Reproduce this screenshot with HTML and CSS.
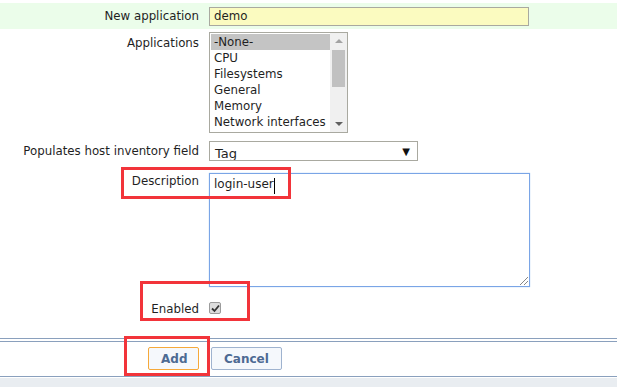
FILE: index.html
```html
<!DOCTYPE html>
<html lang="en">
<head>
  <meta charset="UTF-8" />
  <title>Item prototype</title>
  <link rel="stylesheet" href="styles.css">
</head>
<body>
  <div class="form">
    <div class="row row-new">
      <label class="label">New application</label>
      <div class="field"><div class="input-new">demo</div></div>
    </div>

    <div class="row row-apps">
      <label class="label">Applications</label>
      <div class="field">
        <div class="listbox">
          <ul class="options">
            <li class="selected">-None-</li>
            <li>CPU</li>
            <li>Filesystems</li>
            <li>General</li>
            <li>Memory</li>
            <li>Network interfaces</li>
          </ul>
          <div class="scrollbar">
            <span class="arrow up"></span>
            <span class="thumb"></span>
            <span class="arrow down"></span>
          </div>
        </div>
      </div>
    </div>

    <div class="row row-inventory">
      <label class="label">Populates host inventory field</label>
      <div class="field">
        <div class="select"><span class="select-value">Tag</span><span class="select-arrow">&#9660;</span></div>
      </div>
    </div>

    <div class="row row-desc">
      <label class="label">Description</label>
      <div class="field">
        <div class="textarea"><span>login-user</span><span class="caret"></span><span class="grip"></span></div>
      </div>
    </div>

    <div class="row row-enabled">
      <label class="label">Enabled</label>
      <div class="field">
        <span class="checkbox">
          <svg width="9" height="9" viewBox="0 0 9 9"><path d="M1 4.5 L3.5 7 L8 1.5" fill="none" stroke="#333" stroke-width="1.8"/></svg>
        </span>
      </div>
    </div>
  </div>

  <div class="footer">
    <div class="buttons">
      <button class="btn btn-add">Add</button>
      <button class="btn">Cancel</button>
    </div>
  </div>
  <div class="bottom"></div>

  <!-- annotation boxes drawn on the screenshot -->
  <div class="mark mark-desc"></div>
  <div class="mark mark-enabled"></div>
  <div class="mark mark-add"></div>
</body>
</html>
```

FILE: styles.css
```css
* {
  box-sizing: border-box;
}

body {
  margin: 0;
  padding-top: 3px;
  background-color: #fff;
  font-family: 'DejaVu Sans', Verdana, sans-serif;
  font-size: 11.8px;
  color: #1f1f1f;
  position: relative;
  height: 387px;
  overflow: hidden;
}

.row {
  display: grid;
  grid-template-columns: 199px 1fr;
  column-gap: 10px;
}

.label {
  text-align: right;
  white-space: nowrap;
}

.row-new {
  background-color: #ebfdea;
  height: 26px;
  align-items: center;
}

.input-new {
  width: 320px;
  height: 19px;
  background-color: #fbfbc0;
  border: 1px solid #a9a9a0;
  padding: 1px 4px 0;
}

.row-apps {
  margin-top: 3px;
}

.row-apps .label {
  padding-top: 4px;
}

.listbox {
  width: 139px;
  height: 101px;
  border: 1px solid #a9a9a0;
  display: flex;
  padding: 1px 0 1px 1px;
}

.options {
  list-style: none;
  margin: 0;
  padding: 0;
  flex: 1;
  overflow: hidden;
}

.options li {
  height: 16px;
  line-height: 16px;
  padding-left: 3px;
  white-space: nowrap;
}

.options li.selected {
  background-color: #c4c4c4;
}

.scrollbar {
  width: 17px;
  margin: -1px 0;
  background-color: #f0f0f0;
  position: relative;
}

.thumb {
  position: absolute;
  left: 2px;
  right: 2px;
  top: 17px;
  height: 37px;
  background-color: #c1c1c1;
}

.arrow {
  position: absolute;
  left: 5px;
  width: 0;
  height: 0;
  border-left: 4px solid transparent;
  border-right: 4px solid transparent;
}

.arrow.up {
  top: 6px;
  border-bottom: 4px solid #a3a3a3;
}

.arrow.down {
  bottom: 6px;
  border-top: 4px solid #606060;
}

.row-inventory {
  margin-top: 8px;
  align-items: center;
}

.select {
  width: 209px;
  height: 20px;
  border: 1px solid #a9a9a0;
  display: flex;
  justify-content: space-between;
  align-items: center;
  padding: 0 7px 0 5px;
  overflow: hidden;
}

.select-value {
  font-size: 13px;
  padding-top: 5px;
}

.select-arrow {
  font-size: 10px;
  color: #111;
}

.row-desc {
  margin-top: 12px;
}

.row-desc .label {
  padding-top: 1px;
}

.textarea {
  width: 321px;
  height: 114px;
  border: 1px solid #7aa5e6;
  box-shadow: 0 0 1px #9dc0f0;
  padding: 3px 4px;
  position: relative;
  font-size: 12px;
  display: flex;
  align-items: flex-start;
}

.caret {
  display: inline-block;
  width: 1px;
  height: 16px;
  background-color: #000;
  margin-top: 1px;
}

.grip {
  position: absolute;
  right: 1px;
  bottom: 1px;
  width: 8px;
  height: 8px;
  background: linear-gradient(135deg, transparent 45%, #888 45%, #888 52%, transparent 52%, transparent 70%, #888 70%, #888 77%, transparent 77%);
}

.row-enabled {
  margin-top: 13px;
  align-items: center;
}

.row-enabled .label {
  padding-top: 2px;
}

.checkbox {
  display: flex;
  align-items: center;
  justify-content: center;
  width: 12px;
  height: 12px;
  border: 1px solid #9b9b9b;
  background-color: #dcdcdc;
  border-radius: 2px;
}

.footer {
  margin-top: 22px;
  border-top: 1px solid #8aa0bd;
  border-bottom: 1px solid #8aa0bd;
  padding-top: 2px;
}

.buttons {
  border-top: 1px solid #8aa0bd;
  height: 35px;
  display: flex;
  gap: 12px;
  padding: 5px 0 0 148px;
}

.btn {
  height: 23px;
  padding: 0 12px;
  border: 1px solid #9fb3cf;
  border-radius: 2px;
  background-color: #f5f8fc;
  color: #4d6a93;
  font-family: 'DejaVu Sans', Verdana, sans-serif;
  font-size: 12px;
  font-weight: bold;
}

.btn-add {
  width: 51px;
  border-color: #f6a93a;
}

.bottom {
  background-color: #e9edf1;
  height: 20px;
  margin-top: 1px;
}

.mark {
  position: absolute;
  border: 3px solid #f2343a;
}

.mark-desc {
  left: 121px;
  top: 167px;
  width: 170px;
  height: 32px;
}

.mark-enabled {
  left: 140px;
  top: 281px;
  width: 110px;
  height: 40px;
}

.mark-add {
  left: 124px;
  top: 336px;
  width: 86px;
  height: 40px;
}
```
